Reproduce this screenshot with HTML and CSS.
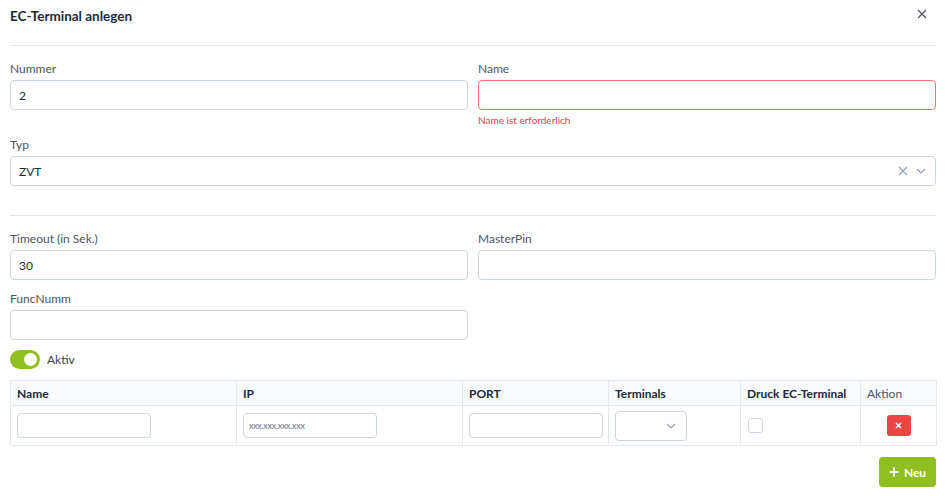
FILE: index.html
```html
<!DOCTYPE html>
<html lang="de">
<head>
<meta charset="utf-8">
<title>EC-Terminal anlegen</title>
<link rel="stylesheet" href="styles.css">
</head>
<body>
<div class="dialog">
  <div class="header">
    <h1 class="title">EC-Terminal anlegen</h1>
    <button class="close" aria-label="Schließen">
      <svg width="10" height="10" viewBox="0 0 10 10"><path d="M1 1L9 9M9 1L1 9" stroke="#4b5563" stroke-width="1.3" fill="none"/></svg>
    </button>
  </div>

  <div class="grid">
    <div class="field">
      <label class="label">Nummer</label>
      <div class="input"><span class="value">2</span></div>
    </div>
    <div class="field">
      <label class="label">Name</label>
      <div class="input invalid"></div>
      <div class="error">Name ist erforderlich</div>
    </div>
    <div class="field span2">
      <label class="label">Typ</label>
      <div class="input select">
        <span class="value">ZVT</span>
        <span class="icons">
          <svg width="10" height="10" viewBox="0 0 10 10"><path d="M1 1L9 9M9 1L1 9" stroke="#94a3b8" stroke-width="1.2" fill="none"/></svg>
          <svg width="10" height="6" viewBox="0 0 10 6"><path d="M1 1L5 5L9 1" stroke="#94a3b8" stroke-width="1.2" fill="none"/></svg>
        </span>
      </div>
    </div>
  </div>

  <hr class="divider">

  <div class="grid">
    <div class="field">
      <label class="label">Timeout (in Sek.)</label>
      <div class="input"><span class="value">30</span></div>
    </div>
    <div class="field">
      <label class="label">MasterPin</label>
      <div class="input"></div>
    </div>
    <div class="field">
      <label class="label">FuncNumm</label>
      <div class="input"></div>
    </div>
  </div>

  <div class="toggle-row">
    <span class="toggle"><span class="knob"></span></span>
    <span class="toggle-label">Aktiv</span>
  </div>

  <table class="table">
    <colgroup>
      <col class="c-name"><col class="c-ip"><col class="c-port"><col class="c-term"><col class="c-druck"><col class="c-akt">
    </colgroup>
    <thead>
      <tr>
        <th>Name</th>
        <th>IP</th>
        <th>PORT</th>
        <th>Terminals</th>
        <th>Druck EC-Terminal</th>
        <th class="normal">Aktion</th>
      </tr>
    </thead>
    <tbody>
      <tr>
        <td><div class="cell-input"></div></td>
        <td><div class="cell-input"><span class="ph">xxx.xxx.xxx.xxx</span></div></td>
        <td><div class="cell-input"></div></td>
        <td><div class="cell-select"><svg width="10" height="6" viewBox="0 0 10 6"><path d="M1 1L5 5L9 1" stroke="#94a3b8" stroke-width="1.2" fill="none"/></svg></div></td>
        <td><span class="checkbox"></span></td>
        <td class="center"><button class="del">
          <svg width="7" height="7" viewBox="0 0 7 7"><path d="M1 1L6 6M6 1L1 6" stroke="#fff" stroke-width="1.6" fill="none"/></svg>
        </button></td>
      </tr>
    </tbody>
  </table>

  <div class="footer">
    <button class="new">
      <svg width="10" height="10" viewBox="0 0 10 10"><path d="M5 0.5V9.5M0.5 5H9.5" stroke="#fff" stroke-width="2" fill="none"/></svg>
      <span>Neu</span>
    </button>
  </div>
</div>
</body>
</html>
```
FILE: styles.css
```css
* { box-sizing: border-box; }
html, body { margin: 0; padding: 0; background: #fff; }
body {
  font-family: "Lato", "Open Sans", "Liberation Sans", sans-serif;
  font-size: 12px;
  color: #374151;
}
.dialog { width: 951px; padding: 0 15px 0 10px; }

.header {
  display: flex;
  justify-content: space-between;
  align-items: flex-start;
  height: 46px;
  border-bottom: 1px solid #e5e7eb;
  padding-top: 6px;
}
.title {
  margin: 0;
  font-size: 13.5px;
  line-height: 20px;
  font-weight: 700;
  color: #1f2937;
}
.close {
  border: 0;
  background: none;
  padding: 0;
  margin: 3px 9px 0 0;
  width: 10px;
  height: 10px;
  display: flex;
}

.grid {
  display: grid;
  grid-template-columns: 1fr 1fr;
  column-gap: 10px;
  row-gap: 11px;
  padding-top: 15px;
}
.span2 { grid-column: 1 / 3; }
.field { display: flex; flex-direction: column; }
.label {
  font-size: 12px;
  line-height: 16px;
  color: #4b5563;
  margin-bottom: 3px;
}
.input {
  height: 30px;
  border: 1px solid #cbd5e1;
  border-radius: 4px;
  display: flex;
  align-items: center;
  padding: 0 8px;
  background: #fff;
}
.input.invalid { border-color: #f87171; }
.value { font-size: 12px; color: #1f2937; }
.error {
  margin-top: 4px;
  font-size: 10px;
  line-height: 12px;
  color: #e0434f;
}
.select { justify-content: space-between; padding-right: 9px; }
.icons { display: flex; align-items: center; gap: 8px; }

.divider {
  border: 0;
  border-top: 1px solid #e5e7eb;
  margin: 29px 0 0;
  height: 0;
}

.toggle-row {
  display: flex;
  align-items: center;
  gap: 7px;
  margin-top: 10px;
  height: 19px;
}
.toggle {
  width: 30px;
  height: 19px;
  border-radius: 10px;
  background: #8fbf21;
  display: flex;
  align-items: center;
  justify-content: flex-end;
  padding-right: 3px;
}
.knob {
  width: 13px;
  height: 13px;
  border-radius: 50%;
  background: #fff;
}
.toggle-label { font-size: 12px; color: #374151; }

.table {
  width: 100%;
  margin-top: 11px;
  border-collapse: collapse;
  table-layout: fixed;
}
.c-name { width: 226px; }
.c-ip { width: 226px; }
.c-port { width: 146px; }
.c-term { width: 132px; }
.c-druck { width: 120px; }
.c-akt { width: 76px; }
.table th, .table td { border: 1px solid #e2e8f0; }
.table th {
  height: 25px;
  background: #f8fafc;
  text-align: left;
  padding: 0 6px;
  font-size: 12px;
  font-weight: 700;
  color: #1e293b;
}
.table th.normal { font-weight: 400; color: #475569; }
.table td { height: 40px; padding: 0 6px; vertical-align: middle; }
.table td.center { text-align: center; }
.cell-input {
  width: 134px;
  height: 25px;
  border: 1px solid #cbd5e1;
  border-radius: 4px;
  display: flex;
  align-items: center;
  padding: 0 5px;
}
.ph { font-size: 9px; color: #6b7280; letter-spacing: -0.3px; }
.cell-select {
  width: 72px;
  height: 30px;
  border: 1px solid #cbd5e1;
  border-radius: 4px;
  display: flex;
  align-items: center;
  justify-content: flex-end;
  padding-right: 10px;
}
.checkbox {
  display: block;
  width: 15px;
  height: 15px;
  border: 1px solid #cbd5e1;
  border-radius: 3px;
  margin-left: 1px;
}
.del {
  width: 24px;
  height: 21px;
  border: 0;
  border-radius: 3px;
  background: #ef4444;
  display: inline-flex;
  align-items: center;
  justify-content: center;
  padding: 0;
  vertical-align: middle;
}

.footer {
  display: flex;
  justify-content: flex-end;
  margin-top: 11px;
}
.new {
  width: 57px;
  height: 30px;
  border: 0;
  border-radius: 4px;
  background: #8fbf21;
  color: #fff;
  font-family: inherit;
  font-size: 12px;
  font-weight: 700;
  display: flex;
  align-items: center;
  justify-content: center;
  gap: 5px;
  padding: 0;
}
```
